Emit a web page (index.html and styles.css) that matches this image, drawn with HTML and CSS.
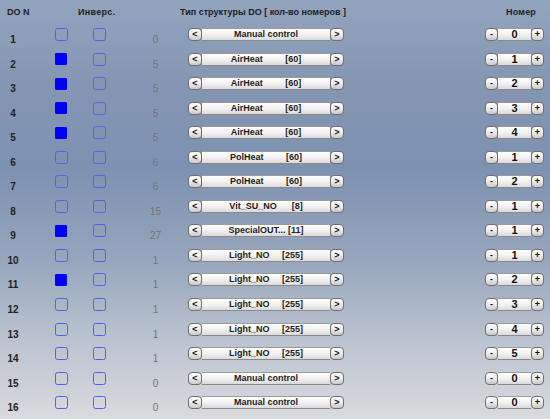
FILE: index.html
```html
<!DOCTYPE html>
<html>
<head>
<meta charset="utf-8">
<link rel="stylesheet" href="styles.css">
</head>
<body>
<div class="page">
  <div class="head">
    <div class="h-num">DO N</div>
    <div class="h-inv">Инверс.</div>
    <div class="h-type">Тип структуры DO [ кол-во номеров ]</div>
    <div class="h-nom">Номер</div>
  </div>
  <div class="rows" id="rows"></div>
</div>
<script src="app.js"></script>
</body>
</html>
```

FILE: app.js
```js
var data = [
  [1, 0, 0, "Manual control", 0],
  [2, 1, 5, "AirHeat         [60]", 1],
  [3, 1, 5, "AirHeat         [60]", 2],
  [4, 1, 5, "AirHeat         [60]", 3],
  [5, 1, 5, "AirHeat         [60]", 4],
  [6, 0, 6, "PolHeat         [60]", 1],
  [7, 0, 6, "PolHeat         [60]", 2],
  [8, 0, 15, "Vit_SU_NO      [8]", 1],
  [9, 1, 27, "SpecialOUT... [11]", 1],
  [10, 0, 1, "Light_NO     [255]", 1],
  [11, 1, 1, "Light_NO     [255]", 2],
  [12, 0, 1, "Light_NO     [255]", 3],
  [13, 0, 1, "Light_NO     [255]", 4],
  [14, 0, 1, "Light_NO     [255]", 5],
  [15, 0, 0, "Manual control", 0],
  [16, 0, 0, "Manual control", 0]
];
var html = "";
data.forEach(function (r) {
  html += '<div class="row">' +
    '<div class="num">' + r[0] + '</div>' +
    '<div class="cb cb1' + (r[1] ? ' on' : '') + '"></div>' +
    '<div class="cb cb2"></div>' +
    '<div class="cnt">' + r[2] + '</div>' +
    '<div class="sel"><div class="btn">&lt;</div><div class="bar">' + r[3] + '</div><div class="btn">&gt;</div></div>' +
    '<div class="spin"><div class="btn">-</div><div class="val">' + r[4] + '</div><div class="btn">+</div></div>' +
    '</div>';
});
document.getElementById("rows").innerHTML = html;
```

FILE: styles.css
```css
html, body {
  margin: 0;
  padding: 0;
}
body {
  width: 550px;
  height: 419px;
  overflow: hidden;
  font-family: "Liberation Sans", Arial, sans-serif;
  background: linear-gradient(to bottom, #93a4bf 0%, #8596b3 20%, #7d91b1 40%, #97a6bd 62%, #bcc4d0 82%, #d9dbde 100%);
  color: #1e1e1e;
}
.page {
  width: 550px;
  height: 419px;
}
.head {
  display: flex;
  height: 26px;
  padding-top: 7px;
  box-sizing: border-box;
  font-size: 9px;
  font-weight: bold;
  line-height: 11px;
}
.h-num {
  margin-left: 7px;
  width: 71px;
}
.h-inv {
  width: 102px;
  letter-spacing: 0.3px;
}
.h-type {
  width: 166px;
  text-align: center;
  white-space: nowrap;
}
.h-nom {
  margin-left: 160px;
  letter-spacing: 0.2px;
}
.rows {
  display: flex;
  flex-direction: column;
}
.row {
  display: flex;
  align-items: flex-start;
  height: 24.56px;
}
.num {
  width: 26px;
  text-align: center;
  font-size: 10px;
  font-weight: bold;
  line-height: 11px;
  padding-top: 8px;
  color: #222;
}
.cb {
  width: 13px;
  height: 13px;
  box-sizing: border-box;
  border: 1.5px solid #5560e4;
  border-radius: 2.5px;
  margin-top: 2px;
}
.cb1 {
  margin-left: 29px;
}
.cb2 {
  margin-left: 25px;
}
.cb.on {
  background: #0000ff;
  border-color: #0000ff;
  border-radius: 1px;
  width: 12px;
  height: 12px;
  margin-top: 2.5px;
  margin-right: 1px;
}
.cnt {
  margin-left: 24px;
  width: 51px;
  text-align: center;
  font-size: 10px;
  line-height: 11px;
  padding-top: 8px;
  color: #737373;
}
.sel {
  margin-left: 7px;
  width: 156px;
  height: 13px;
  margin-top: 2px;
  display: flex;
}
.btn {
  width: 14px;
  height: 13px;
  box-sizing: border-box;
  border: 1px solid #6f6f6f;
  border-radius: 4px;
  background: linear-gradient(to bottom, #ffffff 0%, #ececec 50%, #c9c9c9 100%);
  font-size: 9px;
  font-weight: bold;
  line-height: 11px;
  text-align: center;
  color: #111;
  flex: none;
}
.bar {
  flex: 1;
  height: 13px;
  box-sizing: border-box;
  border-top: 1px solid #9a9a9a;
  border-bottom: 1px solid #8a8a8a;
  background: linear-gradient(to bottom, #ffffff 0%, #f2f2f2 50%, #dadada 100%);
  font-size: 9px;
  font-weight: bold;
  line-height: 11px;
  text-align: center;
  white-space: pre;
  color: #1c1c1c;
}
.spin {
  margin-left: 141px;
  width: 59px;
  height: 13px;
  margin-top: 2px;
  display: flex;
}
.spin .btn {
  width: 13px;
}
.val {
  flex: 1;
  height: 13px;
  box-sizing: border-box;
  border-top: 1px solid #9a9a9a;
  border-bottom: 1px solid #8a8a8a;
  background: linear-gradient(to bottom, #ffffff 0%, #f2f2f2 50%, #dadada 100%);
  font-size: 11px;
  font-weight: bold;
  line-height: 11px;
  text-align: center;
  color: #111;
}
```
